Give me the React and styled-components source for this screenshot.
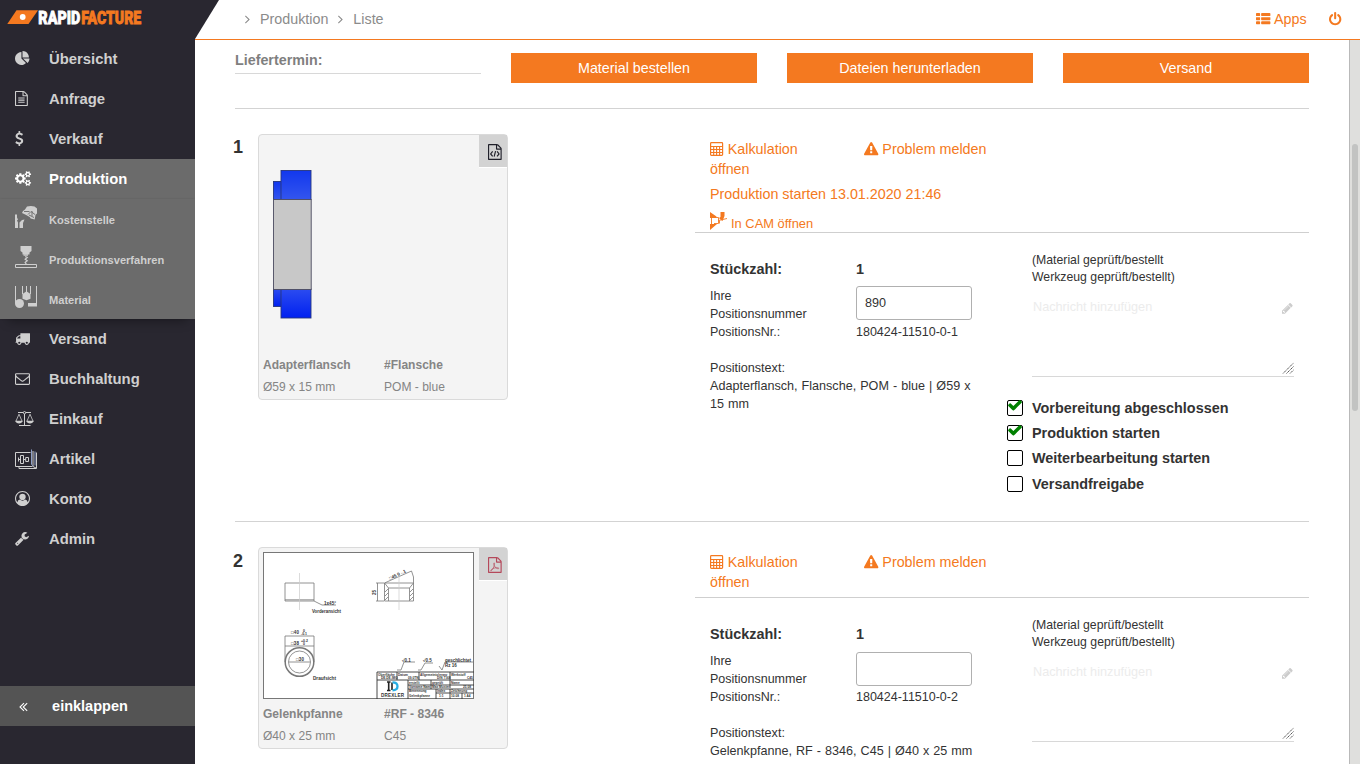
import React from "react";
import styled, { createGlobalStyle, css } from "styled-components";

const ORANGE = "#f47920";
const DARK = "#292730";

const GlobalStyle = createGlobalStyle`
  *, *::before, *::after { box-sizing: border-box; }
  body {
    margin: 0;
    overflow: hidden;
    background: #fff;
    color: #333;
    font-family: "Liberation Sans", Arial, sans-serif;
    font-size: 14.3px;
    line-height: 20px;
  }
`;

/* ---------- icons ---------- */

const SMALL_GEAR = "v140q0 16-149 31-12 27-30 52 51 113 51 138 0 4-4 7-122 71-124 71-8 0-46-47t-52-68q-20 2-30 2t-30-2q-14 21-52 68t-46 47q-2 0-124-71-4-3-4-7 0-25 51-138-18-25-30-52-149-15-149-31v-140q0-16 149-31 13-29 30-52-51-113-51-138 0-4 4-7 4-2 35-20t59-34 30-16q8 0 46 46.500t52 67.500q20-2 30-2t30 2q51-71 92-112l6-2q4 0 124 70 4 3 4 7 0 25-51 138 17 23 30 52 149 15 149 31z";
const SHEET = "M1468 380q28 28 48 76t20 88v1152q0 40-28 68t-68 28h-1344q-40 0-68-28t-28-68v-1600q0-40 28-68t68-28h896q40 0 88 20t76 48zm-444-244v376h376q-10-29-22-41l-313-313q-12-12-41-22zm384 1528v-1024h-416q-40 0-68-28t-28-68v-416h-768v1536h1280z";

const GLYPHS = {
  pie: { w: 1792, d: "M768 890l546 546q-106 108-247.500 168t-298.500 60q-209 0-385.500-103t-279.500-279.500-103-385.500 103-385.500 279.500-279.500 385.500-103v762zm187 6h773q0 157-60 298.500t-168 247.500zm709-128h-768v-768q209 0 385.500 103t279.500 279.500 103 385.500z" },
  file: { w: 1536, d: SHEET + "m-1024-864q0-14 9-23t23-9h704q14 0 23 9t9 23v64q0 14-9 23t-23 9h-704q-14 0-23-9t-9-23v-64zm736 224q14 0 23 9t9 23v64q0 14-9 23t-23 9h-704q-14 0-23-9t-9-23v-64q0-14 9-23t23-9h704zm0 256q14 0 23 9t9 23v64q0 14-9 23t-23 9h-704q-14 0-23-9t-9-23v-64q0-14 9-23t23-9h704z" },
  dollar: { x: 384, w: 1024, d: "M1362 1185q0 153-99.500 263.500t-258.500 136.500v175q0 14-9 23t-23 9h-135q-13 0-22.500-9.500t-9.500-22.500v-175q-66-9-127.500-31t-101.500-44.500-74-48-46.500-37.500-17.500-18q-17-21-2-41l103-135q7-10 23-12 15-2 24 9l2 2q113 99 243 125 37 8 74 8 81 0 142.500-43t61.500-122q0-28-15-53t-33.500-42-58.500-37.500-66-32-80-32.500q-39-16-61.500-25t-61.500-26.500-62.500-31-56.500-35.500-53.500-42.500-43.500-49-35.500-58-21-66.500-8.500-78q0-138 98-242t255-134v-180q0-13 9.500-22.500t22.500-9.500h135q14 0 23 9t9 23v176q57 6 110.500 23t87 33.500 63.500 37.500 39 29 15 14q17 18 5 38l-81 146q-8 15-23 16-14 3-27-7-3-3-14.500-12t-39-26.500-58.500-32-74.500-26-85.500-11.500q-95 0-155 43t-60 111q0 26 8.500 48t29.500 41.500 39.500 33 56 31 60.500 27 70 27.500q53 20 81 31.500t76 35 75.500 42.500 62 50 53 63.500 31.500 76.500 13 94z" },
  cogs: { w: 1920, d: "M896 896q0-106-75-181t-181-75-181 75-75 181 75 181 181 75 181-75 75-181zm768 512q0-52-38-90t-90-38-90 38-38 90q0 53 37.500 90.500t90.500 37.500 90.500-37.500 37.500-90.500zm0-1024q0-52-38-90t-90-38-90 38-38 90q0 53 37.500 90.500t90.500 37.500 90.500-37.500 37.500-90.500zm-384 421v185q0 10-7 19.500t-16 10.500l-155 24q-11 35-32 76 34 48 90 115 7 11 7 20 0 12-7 19-23 30-82.500 89.500t-78.500 59.500q-11 0-21-7l-115-90q-37 19-77 31-11 108-23 155-7 24-30 24h-186q-11 0-20-7.500t-10-17.500l-23-153q-34-10-75-31l-118 89q-7 7-20 7-11 0-21-8-144-133-144-160 0-9 7-19 10-14 41-53t47-61q-23-44-35-82l-152-24q-10-1-17-9.500t-7-19.500v-185q0-10 7-19.500t16-10.500l155-24q11-35 32-76-34-48-90-115-7-11-7-20 0-12 7-20 22-30 82-89t79-59q11 0 21 7l115 90q34-18 77-32 11-108 23-154 7-24 30-24h186q11 0 20 7.500t10 17.500l23 153q34 10 75 31l118-89q8-7 20-7 11 0 21 8 144 133 144 160 0 8-7 19-12 16-42 54t-45 60q23 48 34 82l152 23q10 2 17 10.500t7 19.500zM1920 1338" + SMALL_GEAR + "M1920 314" + SMALL_GEAR },
  truck: { w: 1792, d: "M640 1408q0-52-38-90t-90-38-90 38-38 90 38 90 90 38 90-38 38-90zm-384-512h384v-256h-158q-13 0-22 9l-195 195q-9 9-9 22v30zm1280 512q0-52-38-90t-90-38-90 38-38 90 38 90 90 38 90-38 38-90zm256-1088v1024q0 15-4 26.500t-13.500 18.500-16.500 11.500-23.500 6-22.500 2-25.500 0-22.500-.5q0 106-75 181t-181 75-181-75-75-181h-384q0 106-75 181t-181 75-181-75-75-181h-64q-3 0-22.500.5t-25.500 0-22.500-2-23.500-6-16.500-11.500-13.500-18.500-4-26.500q0-26 19-45t45-19v-320q0-8-.5-35t0-38 2.500-34.500 6.500-37 14-30.500 22.500-30l198-198q19-19 50.500-32t58.500-13h160v-192q0-26 19-45t45-19h1024q26 0 45 19t19 45z" },
  mail: { w: 1792, d: "M1664 1504v-768q-32 36-69 66-268 206-426 338-51 43-83 67t-86.500 48.500-102.500 24.500h-2q-48 0-102.500-24.500t-86.500-48.500-83-67q-158-132-426-338-37-30-69-66v768q0 13 9.500 22.500t22.500 9.500h1472q13 0 22.500-9.500t9.500-22.500zm0-1051v-24.500l-.5-13-3-12.500-5.500-9-9-7.500-14-2.500h-1472q-13 0-22.500 9.500t-9.500 22.500q0 168 147 284 193 152 401 317 6 5 35 29.500t46 37.500 44.500 31.500 50.500 27.500 43 9h2q20 0 43-9t50.500-27.500 44.500-31.500 46-37.500 35-29.500q208-165 401-317 54-43 100.500-115.500t46.500-131.500zm128-37v1088q0 66-47 113t-113 47h-1472q-66 0-113-47t-47-113v-1088q0-66 47-113t113-47h1472q66 0 113 47t47 113z" },
  user: { w: 1792, d: "M896 0q182 0 348 71t286 191 191 286 71 348q0 181-70.500 347t-190.500 286-286 191.500-349 71.500-349-71-285.500-191.500-190.500-286-71-347.500 71-348 191-286 286-191 348-71zm619 1351q149-205 149-455 0-156-61-298t-164-245-245-164-298-61-298 61-245 164-164 245-61 298q0 250 149 455 66-327 306-327 131 128 313 128t313-128q240 0 306 327zm-235-647q0-159-112.500-271.500t-271.500-112.500-271.500 112.500-112.500 271.500 112.500 271.500 271.500 112.500 271.500-112.500 112.500-271.500z" },
  wrench: { x: 64, w: 1728, d: "M448 1472q0-26-19-45t-45-19-45 19-19 45 19 45 45 19 45-19 19-45zm644-420l-682 682q-37 37-90 37-52 0-91-37l-106-108q-38-36-38-90 0-53 38-91l681-681q39 98 114.500 173.500t173.500 114.500zm634-435q0 39-23 106-47 134-164.500 217.500t-258.500 83.500q-185 0-316.500-131.500t-131.500-316.500 131.500-316.500 316.500-131.500q58 0 121.500 16.500t107.500 46.500q16 11 16 28t-16 28l-293 169v224l193 107q5-3 79-48.500t135.500-81 70.500-35.500q15 0 23.500 10t8.500 25z" },
  warning: { w: 1792, d: "M1024 1375v-190q0-14-9.500-23.500t-22.500-9.500h-192q-13 0-22.500 9.500t-9.500 23.500v190q0 14 9.500 23.500t22.500 9.500h192q13 0 22.500-9.500t9.500-23.500zm-2-374l18-459q0-12-10-19-13-11-24-11h-220q-11 0-24 11-10 7-10 21l17 457q0 10 10 16.500t24 6.500h185q14 0 23.500-6.500t10.500-16.500zm-14-934l768 1408q35 63-2 126-17 29-46.500 46t-63.500 17h-1536q-34 0-63.500-17t-46.500-46q-37-63-2-126l768-1408q17-31 47-49t65-18 65 18 47 49z" },
  power: { x: 128, w: 1536, d: "M1664 896q0 156-61 298t-164 245-245 164-298 61-298-61-245-164-164-245-61-298q0-182 80.500-343t226.500-270q43-32 95.500-25t83.500 50q32 42 24.500 94.500t-49.500 84.500q-98 74-151.500 181t-53.500 228q0 104 40.500 198.500t109.500 163.500 163.500 109.500 198.500 40.500 198.500-40.500 163.500-109.500 109.500-163.500 40.500-198.500q0-121-53.500-228t-151.500-181q-42-32-49.500-84.500t24.500-94.500q31-43 84-50t95 25q146 109 226.500 270t80.500 343zm-640-768v640q0 52-38 90t-90 38-90-38-38-90v-640q0-52 38-90t90-38 90 38 38 90z" },
  pencil: { x: 128, w: 1536, d: "M491 1536l91-91-235-235-91 91v107h128v128h107zm523-928q0-22-22-22-10 0-17 7l-542 542q-7 7-7 17 0 22 22 22 10 0 17-7l542-542q7-7 7-17zm-54-192l416 416-832 832h-416v-416zm683 96q0 53-37 90l-166 166-416-416 166-165q36-38 90-38 53 0 91 38l235 234q37 39 37 91z" },
  check: { w: 1792, d: "M1671 566q0 40-28 68l-724 724-136 136q-28 28-68 28t-68-28l-136-136-362-362q-28-28-28-68t28-68l136-136q28-28 68-28t68 28l294 295 656-657q28-28 68-28t68 28l136 136q28 28 28 68z" },
  angle: { x: 576, w: 640, d: "M1171 960q0 13-10 23l-466 466q-10 10-23 10t-23-10l-50-50q-10-10-10-23t10-23l393-393-393-393q-10-10-10-23t10-23l50-50q10-10 23-10t23 10l466 466q10 10 10 23z" },
  collapse: { x: 384, w: 1024, d: "M1011 1376q0 13-10 23l-50 50q-10 10-23 10t-23-10l-466-466q-10-10-10-23t10-23l466-466q10-10 23-10t23 10l50 50q10 10 10 23t-10 23l-393 393 393 393q10 10 10 23zm384 0q0 13-10 23l-50 50q-10 10-23 10t-23-10l-466-466q-10-10-10-23t10-23l466-466q10-10 23-10t23 10l50 50q10 10 10 23t-10 23l-393 393 393 393q10 10 10 23z" },
  list: { w: 1792, d: "M512 1248v192q0 40-28 68t-68 28h-320q-40 0-68-28t-28-68v-192q0-40 28-68t68-28h320q40 0 68 28t28 68zm0-512v192q0 40-28 68t-68 28h-320q-40 0-68-28t-28-68v-192q0-40 28-68t68-28h320q40 0 68 28t28 68zm1280 512v192q0 40-28 68t-68 28h-960q-40 0-68-28t-28-68v-192q0-40 28-68t68-28h960q40 0 68 28t28 68zm-1280-1024v192q0 40-28 68t-68 28h-320q-40 0-68-28t-28-68v-192q0-40 28-68t68-28h320q40 0 68 28t28 68zm1280 512v192q0 40-28 68t-68 28h-960q-40 0-68-28t-28-68v-192q0-40 28-68t68-28h960q40 0 68 28t28 68zm0-512v192q0 40-28 68t-68 28h-960q-40 0-68-28t-28-68v-192q0-40 28-68t68-28h960q40 0 68 28t28 68z" },
};

const Svg = styled.svg`
  display: block;
  flex: none;
  overflow: visible;
`;

function Glyph({ name, size = 15 }) {
  const { x = 0, w, d } = GLYPHS[name];
  return (
    <Svg width={(w / 1792) * size} height={size} viewBox={`${x} 0 ${w} 1792`} fill="currentColor">
      <path d={d} />
    </Svg>
  );
}

const ScaleIcon = () => (
  <Svg width="19" height="16" viewBox="0 0 19 16" fill="none" stroke="currentColor">
    <path d="M3 1.500h13M9.500 1.500v13M4 14.500h11.500" strokeWidth="1" />
    <circle cx="9.500" cy="1.700" r="1.200" fill={DARK} strokeWidth=".9" />
    <path d="M4 3.200L.8 10.500M4 3.200l3.200 7.300M15 3.200l-3.200 7.300M15 3.200l3.200 7.300" strokeWidth=".8" />
    <path d="M.3 9.800h7.400q-.8 2.700-3.700 2.700T.3 9.800zM11.300 9.800h7.400q-.8 2.700-3.700 2.700t-3.700-2.700z" fill="currentColor" stroke="none" />
  </Svg>
);

const ArticleIcon = () => (
  <Svg width="22" height="20" viewBox="0 0 22 20" fill="none" stroke="currentColor">
    <path d="M15.500 3.500H.5v14h17" />
    <path d="M4 17.500v2h17.500V3.500" />
    <path d="M18 2v15.500l3 1.500" />
    <path d="M16.500.5v15l1.700 1.500M20 2.500v14" stroke="#8fa0c8" />
    <path d="M3.500 8.500v4M5.500 6.500h3v8h-3zM3 10.500h2.500M8.500 10.500h2.200M10.700 8.500h2.800v4h-2.800z" strokeWidth="1" />
  </Svg>
);

const WelderIcon = () => (
  <Svg width="22" height="22" viewBox="0 0 22 22" fill="currentColor">
    <path d="M12 .4q4-.8 7.500 0L22 2.500v5l-1.500 1.200-.8 4.800-4-1-1-1.600-4.500-2.300L7 7l1-2 2-1.500z" />
    <path d="M0 8.500h2v3l1 2-1 1 1 2V22H0zM4.500 22v-5.500L7 14l2.500-.5L8 17v5z" />
    <path d="M9 5.500l5.500 0M13 8.500l3-3 4 3M14 9l5 2.500M17 5v5" stroke="#6b6b6b" strokeWidth=".9" fill="none" />
  </Svg>
);

const DrillIcon = () => (
  <Svg width="22" height="22" viewBox="0 0 22 22">
    <path d="M5.500 0h11v5l-2 1.500v2h-7v-2l-2-1.500z" fill="currentColor" />
    <path d="M8.500 9h4.500M10.200 10.500l2 1-2 1.700 2 1.600-2 1.500 1 1.700" fill="none" stroke="currentColor" strokeWidth="1.300" />
    <path d="M.5 18.500h21v3H.5z" fill="none" stroke="currentColor" />
  </Svg>
);

const MaterialIcon = () => (
  <Svg width="22" height="22" viewBox="0 0 22 22" fill="currentColor">
    <path d="M.5 0v17M7.500 0v8M11.500 0v6M15.500 0v8M21.500 0v17" stroke="currentColor" strokeWidth="1" />
    <circle cx="4.500" cy="17.500" r="4.500" />
    <path d="M7.500 8l4-2.800 4 2.800v4.800l-4 1.500-4-1.500zM13 17h9v3.500h-9z" />
  </Svg>
);

const CalculatorIcon = () => (
  <Svg width="13.800" height="14" viewBox="0 0 13.800 14" fill="none" stroke="currentColor">
    <rect x=".6" y=".6" width="12" height="12.800" rx=".8" strokeWidth="1.200" />
    <path d="M1 4.500h11.500M1 7.500h11.500M1 10.500h11.500M3.700 5v8M6.600 5v8M9.600 5v8" strokeWidth="1.100" />
  </Svg>
);

const CamIcon = () => (
  <Svg width="18" height="18" viewBox="0 0 18 18">
    <path d="M0 0l6.500 4.500L6 6H0zM10.500 0h4v4l-2 5-2-1.500-1.500-1.500 1.500-1zM0 18v-6h7z" fill={ORANGE} />
    <path d="M1.500 6v6M2 5.500h6.500v6H4M9.500 11.500V8.500M8.500 8.500l8.500-2" stroke={ORANGE} strokeWidth=".9" fill="none" />
  </Svg>
);

const CodeFileIcon = () => (
  <Svg width="13.700" height="16" viewBox="0 0 1536 1792" fill="#20202a">
    <path d={SHEET} />
    <path d="M520 830L300 1110l220 280M1020 830l220 280-220 280M850 800L690 1420" fill="none" stroke="#20202a" strokeWidth="130" />
  </Svg>
);

const PdfFileIcon = () => (
  <Svg width="13.700" height="16" viewBox="0 0 1536 1792" fill="#b5485a">
    <path d={SHEET} />
    <path d="M690 660c-90 0-20 300 100 460 120 150 400 260 420 150 20-110-440-60-560-10-150 60-360 180-340 270 40 100 250-190 340-420 60-160 110-450 40-450z" fill="none" stroke="#b5485a" strokeWidth="75" />
  </Svg>
);

/* ---------- sidebar ---------- */

const Shell = styled.div`
  display: grid;
  grid-template: 40px 724px / 195px 1fr;
  width: 1360px;
  height: 764px;
  overflow: hidden;
`;

const Sidebar = styled.aside`
  grid-row: 1 / 3;
  display: flex;
  flex-direction: column;
  overflow: hidden;
  background: ${DARK};
  color: #cfcfcf;
`;

const LogoBox = styled.div`
  height: 39px;
  padding: 9px 0 0 7px;
`;

const Menu = styled.nav`
  flex: 1;
`;

const IconSlot = styled.span`
  display: flex;
  width: 34px;
  margin-top: -1px;
`;

const MenuItem = styled.a`
  display: flex;
  align-items: center;
  height: 40px;
  padding-left: 15px;
  font-size: 14.85px;
  font-weight: bold;
  ${(p) => p.$active && css`
    color: #fff;
    background: #6b6b6b;
  `}
`;

const SubMenu = styled.div`
  background: #6b6b6b;
  box-shadow: 0 10px 10px -8px rgba(0, 0, 0, 0.35), 0 0 2px rgba(0, 0, 0, 0.12);
`;

const SubItem = styled(MenuItem)`
  font-size: 11.1px;
  line-height: 16px;
  padding-top: 1px;

  ${IconSlot} {
    margin-top: -6px;
  }
`;

const Collapse = styled.button`
  display: flex;
  align-items: center;
  gap: 25px;
  height: 40px;
  margin: 0 0 38px;
  padding: 0 0 0 18.500px;
  border: 0;
  background: #545454;
  color: #fff;
  font: bold 14.5px "Liberation Sans", sans-serif;
`;

/* ---------- header ---------- */

const TopBar = styled.header`
  display: flex;
  align-items: center;
  height: 40px;
  padding: 0 18.500px 1px 0;
  border-bottom: 1px solid ${ORANGE};
  color: #8b8b8b;
`;

const Slant = styled.div`
  align-self: flex-start;
  width: 24px;
  height: 39px;
  margin-right: 26px;
  background: ${DARK};
  clip-path: polygon(0 0, 100% 0, 0 100%);
`;

const Crumbs = styled.div`
  display: flex;
  align-items: center;
  gap: 10px;
`;

const Tools = styled.div`
  display: flex;
  align-items: center;
  margin-left: auto;
  gap: 22.500px;
  color: ${ORANGE};
`;

const Tool = styled.a`
  display: flex;
  align-items: center;
  gap: 4px;
`;

/* ---------- content ---------- */

const Body = styled.div`
  display: flex;
  min-width: 0;
`;

const Content = styled.main`
  width: 1154px;
  padding: 13px 40px 0;
`;

const ActionRow = styled.div`
  display: grid;
  grid-template-columns: repeat(4, 1fr);
  gap: 30px;
  height: 56px;
  border-bottom: 1px solid #d3d3d3;
`;

const FieldLabel = styled.div`
  height: 21px;
  border-bottom: 1px solid #d8d8d8;
  color: #7f7f7f;
  font-weight: bold;
  line-height: 15px;
`;

const ActionButton = styled.button`
  height: 30px;
  border: 0;
  background: ${ORANGE};
  color: #fff;
  font: 14.3px "Liberation Sans", sans-serif;
`;

const Item = styled.article`
  display: grid;
  grid-template-columns: 23px 437px 614px;
  height: 413.400px;
  padding-top: 25px;
  border-bottom: 1px solid #d3d3d3;
`;

const Index = styled.div`
  margin-left: -2px;
  padding-top: 3.300px;
  font-size: 18px;
  font-weight: bold;
`;

const Card = styled.div`
  position: relative;
  align-self: start;
  width: 250px;
  padding: 4px 4px 1px;
  border: 1px solid #dadada;
  border-radius: 4px;
  background: #f4f4f4;
  color: #858585;
  font-size: 12.05px;
`;

const FileTag = styled.div`
  position: absolute;
  top: 0;
  right: 0;
  display: flex;
  justify-content: center;
  align-items: center;
  width: 28px;
  height: 32px;
  padding: 1px 0 0 3px;
  background: #d3d3d3;
  box-shadow: 0 1px 0 #fff;
`;

const Caption = styled.div`
  display: grid;
  grid-template-columns: 121px 1fr;
  padding-top: 5px;
  line-height: 21.500px;
`;

const Details = styled.section`
  padding-top: 5px;
`;

const LinkBlock = styled.div`
  padding: 0 15px 5px;
  border-bottom: 1px solid #cfcfcf;
  color: ${ORANGE};

  svg {
    display: inline-block;
    vertical-align: -2px;
  }
`;

const LinkPair = styled.div`
  display: grid;
  grid-template-columns: 124px 1fr;
  column-gap: 30px;
`;

const StartLine = styled.div`
  margin-top: 5px;
`;

const CamLine = styled.div`
  display: flex;
  align-items: flex-end;
  gap: 3px;
  height: 28px;
  margin-bottom: -5px;
  font-size: 12.9px;
  line-height: 17px;

  svg {
    margin-bottom: 2px;
  }
`;

const Columns = styled.div`
  display: grid;
  grid-template-columns: 262px 287px;
  column-gap: 35px;
  padding: 18px 15px 0;
`;

const Facts = styled.div`
  display: grid;
  grid-template-columns: 116px 116px;
  column-gap: 30px;
  align-content: start;
  padding-top: 8px;
  font-size: 12.5px;
  line-height: 18px;
`;

const Strong = styled.strong`
  font-size: 14.4px;
  line-height: 20px;
  margin-bottom: 8px;
`;

const NumberInput = styled.input`
  width: 116px;
  height: 34px;
  margin-top: -0.800px;
  padding: 0 8px;
  border: 1px solid #b0b0b0;
  border-radius: 3px;
  background: #fff;
  color: #333;
  font: 12.6px "Liberation Sans", sans-serif;
`;

const PositionText = styled.p`
  grid-column: 1 / 3;
  margin: 18px -10px 0 0;
  font-size: 12.6px;
  word-spacing: 0.550px;
`;

const Status = styled.div`
  padding-left: 25px;
`;

const Note = styled.div`
  padding-top: 1px;
  font-size: 12.25px;
  line-height: 17px;
`;

const Message = styled.div`
  display: flex;
  flex-wrap: wrap;
  justify-content: space-between;
  align-content: space-between;
  height: 83px;
  margin-top: 8px;
  padding: 3px 1px 2px;
  border-bottom: 1px solid #d8d8d8;
  color: #ececec;
  font-size: 12.7px;
  line-height: 20px;
`;

const EditMark = styled.span`
  color: #cccccc;
  padding: 5px 0 0;
`;

const Grip = styled.span`
  width: 100%;
  display: flex;
  justify-content: flex-end;
`;

const Checks = styled.div`
  margin: 18px 0 0 -25px;
`;

const CheckRow = styled.label`
  display: flex;
  align-items: center;
  gap: 9px;
  height: 25.300px;
  font-size: 14.4px;
  font-weight: bold;
`;

const Box = styled.span`
  width: 16px;
  height: 16px;
  border: 1px solid #000;
  border-radius: 2px;
  color: #008000;

  svg {
    margin: -4px 0 0 -1px;
  }
`;

const ScrollTrack = styled.div`
  width: 11px;
  padding: 104px 2px 0;
  border-left: 1px solid #b9b9b9;
  background: #dfdfdd;
`;

const ScrollThumb = styled.div`
  width: 6px;
  height: 267px;
  border-radius: 3px;
  background: #c2c3c2;
`;

/* ---------- drawings ---------- */

const Logo = () => (
  <Svg width="136" height="18" viewBox="0 0 136 18">
    <path d="M9.500 1.200H31L21.500 15H.3z" fill={ORANGE} />
    <circle cx="15.700" cy="8" r="2.900" fill="#fff" />
    <g fontFamily="Roboto, sans-serif" fontWeight="900" fontSize="18" strokeWidth=".8">
      <text x="31.300" y="14.600" fill="#fff" stroke="#fff" textLength="42" lengthAdjust="spacingAndGlyphs">RAPID</text>
      <text x="74.200" y="14.600" fill={ORANGE} stroke={ORANGE} textLength="60" lengthAdjust="spacingAndGlyphs">FACTURE</text>
    </g>
  </Svg>
);

const FlangeDrawing = () => (
  <Svg width="211" height="211" viewBox="0 0 211 211">
    <defs>
      <linearGradient id="blueTop" x1="0" y1="0" x2="0" y2="1">
        <stop offset="0" stopColor="#1238ee" />
        <stop offset="1" stopColor="#3355ee" />
      </linearGradient>
      <linearGradient id="blueBottom" x1="0" y1="0" x2="0" y2="1">
        <stop offset="0" stopColor="#2c4cf0" />
        <stop offset="1" stopColor="#0020f0" />
      </linearGradient>
    </defs>
    <g stroke="#26357d" strokeWidth=".9">
      <rect x="10.500" y="42.500" width="8" height="18" fill="url(#blueTop)" />
      <rect x="18" y="31.500" width="30" height="29" fill="url(#blueTop)" />
      <rect x="10.500" y="150" width="8" height="17.500" fill="url(#blueBottom)" />
      <rect x="18" y="150" width="30" height="29" fill="url(#blueBottom)" />
      <rect x="10.500" y="60.500" width="37.700" height="90" fill="#c8c8c8" stroke="#4c4c60" />
    </g>
  </Svg>
);

const SocketDrawing = () => (
  <Svg width="211" height="147" viewBox="0 0 211 147" fontFamily="Liberation Sans, sans-serif" fontWeight="bold" fontSize="4.500" fill="#333">
    <rect x=".5" y=".5" width="210" height="146" fill="#fff" stroke="#777" />
    <g fill="none" stroke="#777" strokeWidth=".8">
      <path d="M22 31h29v18H22zM22 47.800h29M51 49l8 4h14" />
      <path d="M121.500 31h29v18h-29zM121.500 31l4 5h21l4-5M125.500 36v13M146.500 36v13M121.500 31l27-12q3 6 2 12" />
      <path d="M114.500 31v18M113 31h8M113 49h8" />
      <path d="M122 40l3-3M122 44l3-3M122 48l3-3M147 40l3-3M147 44l3-3M147 48l3-3" />
      <circle cx="36.500" cy="110" r="14.300" strokeWidth="1.500" />
      <circle cx="36.500" cy="110" r="11" />
      <path d="M22 110V84M51 110V84M22 84h29M22 94h29M26 110h21" />
      <path d="M134 118h4l3-8h11M155 118h3l4-7h8M176 114l3 4 3-8h28" />
    </g>
    <path d="M36.500 21v37M136 21v37" stroke="#ccc" strokeWidth=".7" />
    <text x="61" y="52.500" textLength="12">1x45°</text>
    <text x="49" y="61" textLength="29" lengthAdjust="spacingAndGlyphs">Vorderansicht</text>
    <text x="28" y="82" textLength="8">□40</text><text x="40" y="79.500" fontSize="3.500">0</text><text x="38" y="83" fontSize="3.500">-0.1</text>
    <text x="28" y="92.500" textLength="8">□38</text><text x="38" y="89.500" fontSize="3.500">+0.2</text><text x="40" y="93.200" fontSize="3.500">0</text>
    <text x="33" y="109" textLength="8">□30</text>
    <text x="50" y="128" textLength="23" lengthAdjust="spacingAndGlyphs">Draufsicht</text>
    <text x="127" y="28" transform="rotate(-26 127 28)">□45 0 -.1</text>
    <text x="113" y="43" transform="rotate(-90 113 43)">25</text>
    <text x="139" y="110">√0.1</text><text x="160" y="110">√0.5</text>
    <text x="182" y="110" textLength="26" lengthAdjust="spacingAndGlyphs">geschlichtet</text><text x="182" y="114.500">Rz 16</text>
    <g stroke="#333" strokeWidth=".9" fill="none">
      <path d="M114 120h97M114 128h97M114 120v27M134 120v8M156 120v8M187 120v16M145 128v19M145 137h66M168 128v9M173 137v10M187 137v10M199 141v6M145 133h66M173 141h38" />
    </g>
    <g fontSize="3.200">
      <text x="115" y="123.500">Oberfläche</text><text x="135" y="123.500">Datum</text><text x="157" y="123.500">Allgemeintoleranz</text><text x="188" y="123.500">Werkstoff</text>
      <text x="118" y="127.300">DE.DE.IMG</text><text x="145" y="127.300">09.0TN</text><text x="174" y="127.300">DIN 7168</text><text x="204" y="127.300">C45</text>
      <text x="146" y="132">erstellt</text><text x="169" y="132">geprüft</text><text x="188" y="132">Name</text>
      <text x="146" y="136.300">Vorname Nam</text><text x="169" y="136.300">Max Muster</text><text x="200" y="136.300">25.08</text>
      <text x="146" y="140.300">Benennung</text><text x="174" y="140.300">Index</text><text x="188" y="140.300">Zeichnung</text>
      <text x="146" y="144.800">Gelenkpfanne</text><text x="176" y="144.800">1:1</text><text x="188" y="144.800">10.08</text><text x="201" y="144.800">1 A4</text>
    </g>
    <path d="M124 130h3.500M125.700 130v8.500M124 138.500h3.500M129 130.500v7.500" stroke="#222" strokeWidth="1.600" />
    <path d="M129.500 130.300q5 0 5 4t-5 4" stroke="#27aee4" strokeWidth="2.300" fill="none" />
    <text x="118" y="145.300" fontSize="4.600" textLength="23">DREXLER</text>
  </Svg>
);

/* ---------- data ---------- */

const STEPS = ["Vorbereitung abgeschlossen", "Produktion starten", "Weiterbearbeitung starten", "Versandfreigabe"];

const ITEMS = [
  {
    name: "Adapterflansch", tag: "#Flansche", size: "Ø59 x 15 mm", material: "POM - blue",
    drawing: <FlangeDrawing />, fileIcon: <CodeFileIcon />, started: "13.01.2020 21:46",
    own: "890", nr: "180424-11510-0-1", text: "Adapterflansch, Flansche, POM - blue | Ø59 x 15 mm", done: 2,
  },
  {
    name: "Gelenkpfanne", tag: "#RF - 8346", size: "Ø40 x 25 mm", material: "C45",
    drawing: <SocketDrawing />, fileIcon: <PdfFileIcon />,
    own: "", nr: "180424-11510-0-2", text: "Gelenkpfanne, RF - 8346, C45 | Ø40 x 25 mm", done: 0,
  },
];

function Position({ item, index }) {
  return (
    <Item>
      <Index>{index}</Index>
      <Card>
        {item.drawing}
        <FileTag>{item.fileIcon}</FileTag>
        <Caption>
          <b>{item.name}</b><b>{item.tag}</b>
          <span>{item.size}</span><span>{item.material}</span>
        </Caption>
      </Card>
      <Details>
        <LinkBlock>
          <LinkPair>
            <span><CalculatorIcon /> Kalkulation öffnen</span>
            <span><Glyph name="warning" size={14.4} /> Problem melden</span>
          </LinkPair>
          {item.started && <StartLine>Produktion starten {item.started}</StartLine>}
          {item.started && <CamLine><CamIcon />In CAM öffnen</CamLine>}
        </LinkBlock>
        <Columns>
          <Facts>
            <Strong>Stückzahl:</Strong><Strong>1</Strong>
            <span>Ihre Positionsnummer</span><NumberInput defaultValue={item.own} />
            <span>PositionsNr.:</span><span>{item.nr}</span>
            <PositionText>Positionstext:<br />{item.text}</PositionText>
          </Facts>
          <Status>
            <Note>(Material geprüft/bestellt<br />Werkzeug geprüft/bestellt)</Note>
            <Message>
              <span>Nachricht hinzufügen</span>
              <EditMark><Glyph name="pencil" size={12.6} /></EditMark>
              <Grip>
                <Svg width="10.500" height="11" viewBox="0 0 10.500 11" stroke="#5a5a5a" strokeDasharray="1.600 .5">
                  <path d="M0 10.500L10.500 0M3.500 10.500l7-7M7 10.500L10.500 7" />
                </Svg>
              </Grip>
            </Message>
            <Checks>
              {STEPS.map((step, i) => (
                <CheckRow key={step}>
                  <Box>{i < item.done && <Glyph name="check" size={16} />}</Box>
                  {step}
                </CheckRow>
              ))}
            </Checks>
          </Status>
        </Columns>
      </Details>
    </Item>
  );
}

const Entry = ({ as: Kind = MenuItem, icon, label, active }) => (
  <Kind $active={active}><IconSlot>{icon}</IconSlot>{label}</Kind>
);

export default function App() {
  return (
    <>
      <GlobalStyle />
      <Shell>
        <Sidebar>
          <LogoBox><Logo /></LogoBox>
          <Menu>
            <Entry icon={<Glyph name="pie" />} label="Übersicht" />
            <Entry icon={<Glyph name="file" />} label="Anfrage" />
            <Entry icon={<Glyph name="dollar" />} label="Verkauf" />
            <Entry icon={<Glyph name="cogs" />} label="Produktion" active />
            <SubMenu>
              <Entry as={SubItem} icon={<WelderIcon />} label="Kostenstelle" />
              <Entry as={SubItem} icon={<DrillIcon />} label="Produktionsverfahren" />
              <Entry as={SubItem} icon={<MaterialIcon />} label="Material" />
            </SubMenu>
            <Entry icon={<Glyph name="truck" />} label="Versand" />
            <Entry icon={<Glyph name="mail" />} label="Buchhaltung" />
            <Entry icon={<ScaleIcon />} label="Einkauf" />
            <Entry icon={<ArticleIcon />} label="Artikel" />
            <Entry icon={<Glyph name="user" />} label="Konto" />
            <Entry icon={<Glyph name="wrench" />} label="Admin" />
          </Menu>
          <Collapse><Glyph name="collapse" size={15} />einklappen</Collapse>
        </Sidebar>
        <TopBar>
          <Slant />
          <Crumbs>
            <Glyph name="angle" size={14} /><span>Produktion</span>
            <Glyph name="angle" size={14} /><span>Liste</span>
          </Crumbs>
          <Tools>
            <Tool><Glyph name="list" size={14.4} />Apps</Tool>
            <Tool><Glyph name="power" size={14.4} /></Tool>
          </Tools>
        </TopBar>
        <Body>
          <Content>
            <ActionRow>
              <FieldLabel>Liefertermin:</FieldLabel>
              <ActionButton>Material bestellen</ActionButton>
              <ActionButton>Dateien herunterladen</ActionButton>
              <ActionButton>Versand</ActionButton>
            </ActionRow>
            {ITEMS.map((item, i) => <Position key={item.nr} item={item} index={i + 1} />)}
          </Content>
          <ScrollTrack><ScrollThumb /></ScrollTrack>
        </Body>
      </Shell>
    </>
  );
}
